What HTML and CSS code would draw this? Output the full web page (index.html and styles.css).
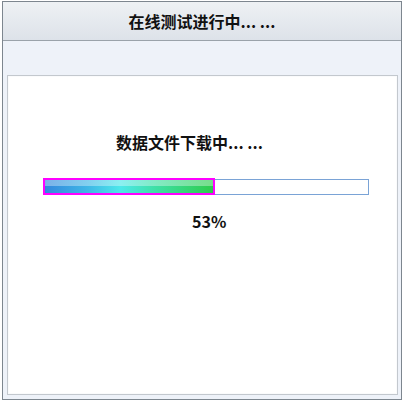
FILE: index.html
```html
<!DOCTYPE html>
<html>
<head>
<meta charset="utf-8">
<link rel="stylesheet" href="styles.css">
</head>
<body>
<div class="window">
  <div class="header">在线测试进行中... ...</div>
  <div class="band"></div>
  <div class="content">
    <div class="title">数据文件下载中... ...</div>
    <div class="track">
      <div class="fill" style="width:53%"></div>
    </div>
    <div class="pct">53%</div>
  </div>
</div>
</body>
</html>
```
FILE: styles.css
```css
html, body { margin: 0; padding: 0; background: #ffffff; }
body { font-family: "Noto Sans CJK SC", "Noto Sans", sans-serif; }
.window {
  margin: 1px 0 0 2px;
  width: 398px;
  height: 397px;
  border: 1px solid #7d868f;
  background: #eef2f9;
  display: flex;
  flex-direction: column;
}
.header {
  height: 38px;
  border-bottom: 1px solid #9aa2aa;
  background: linear-gradient(#eef1f4, #dde2e9);
  display: flex;
  align-items: center;
  justify-content: center;
  font-size: 16px;
  font-weight: bold;
  color: #111;
}
.band { height: 34px; }
.content {
  margin: 0 3px 4px 4px;
  flex: 1;
  background: #fff;
  border: 1px solid #c3c8ce;
  box-shadow: inset 0 0 0 1px #fafbfc;
  display: flex;
  flex-direction: column;
}
.title {
  margin: 55px 0 0 108px;
  font-size: 16px;
  font-weight: bold;
  color: #111;
  line-height: 22px;
}
.track {
  margin: 26px 0 0 35px;
  width: 324px;
  height: 14px;
  border: 1px solid #7aa3d6;
  position: relative;
  background: #fff;
}
.fill {
  position: absolute;
  left: -1px;
  top: -2px;
  height: 13px;
  border: 2px solid #ff00ff;
  box-sizing: content-box;
  background:
    linear-gradient(rgba(255,255,255,0.35), rgba(255,255,255,0.35) 45%, rgba(255,255,255,0) 50%),
    linear-gradient(90deg, #3388dd 0%, #3fb6e6 25%, #4de8ea 45%, #3fe0a8 65%, #2ecc4c 100%);
  max-width: 168px;
}
.pct {
  margin: 15px 0 0 184px;
  font-size: 16px;
  font-weight: bold;
  color: #111;
  line-height: 22px;
}
```
